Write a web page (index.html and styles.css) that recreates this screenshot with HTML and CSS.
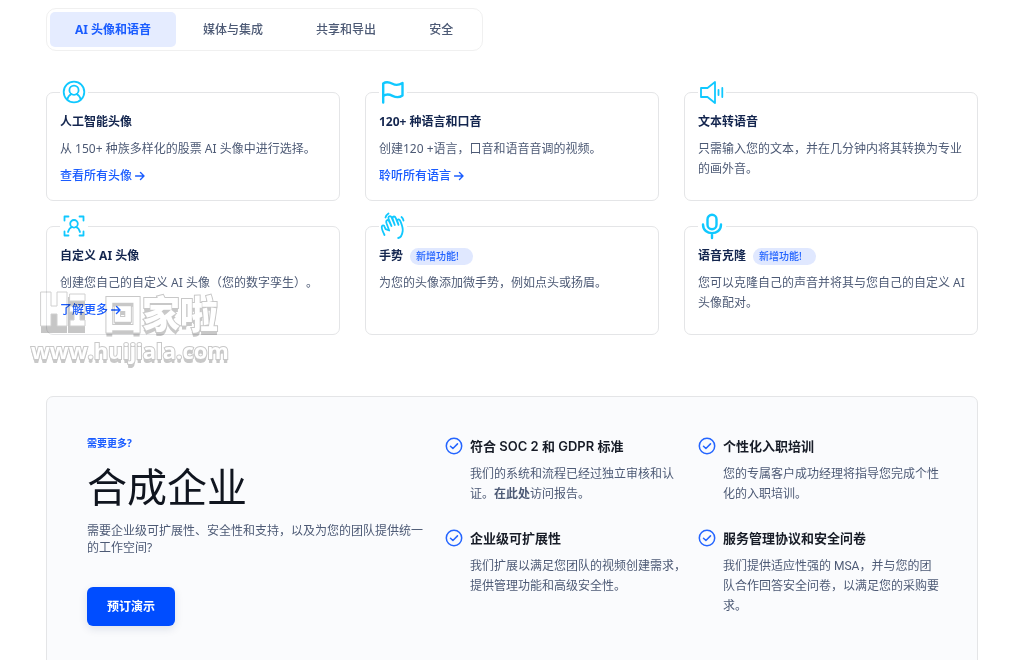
FILE: index.html
```html
<!DOCTYPE html>
<html lang="zh-CN">
<head>
<meta charset="utf-8">
<meta name="viewport" content="width=device-width, initial-scale=1">
<title>合成企业</title>
<link rel="stylesheet" href="styles.css">
</head>
<body>
<main class="page">
  <nav class="tabs">
    <button class="tab tab-active" type="button">AI 头像和语音</button>
    <button class="tab" type="button">媒体与集成</button>
    <button class="tab" type="button">共享和导出</button>
    <button class="tab" type="button">安全</button>
  </nav>

  <section class="cards">
    <article class="card">
      <span class="card-icon"><svg viewBox="0 0 24 24"><circle cx="12" cy="12" r="10.3"/><circle cx="12" cy="10.2" r="4.6"/><path d="M5.2 19.500c.8-3.400 2.500-4.600 4.300-5.500M18.800 19.500c-.8-3.400-2.500-4.600-4.300-5.500"/></svg></span>
      <h3>人工智能头像</h3>
      <p>从 150+ 种族多样化的股票 AI 头像中进行选择。</p>
      <a class="link" href="#">查看所有头像<svg viewBox="0 0 10 10"><path d="M.5 5h8.500M5.500 1.500 9 5 5.500 8.500"/></svg></a>
    </article>
    <article class="card">
      <span class="card-icon icon-bold"><svg viewBox="0 0 24 24"><path d="M2.200 22.500V3.500C5 1.500 8 2 11.500 3.800S18 5.200 21.500 3V15.500C18 18 15 17.500 11.500 15.800S5 14 2.200 16"/></svg></span>
      <h3>120+ 种语言和口音</h3>
      <p>创建120 +语言，口音和语音音调的视频。</p>
      <a class="link" href="#">聆听所有语言<svg viewBox="0 0 10 10"><path d="M.5 5h8.500M5.500 1.500 9 5 5.500 8.500"/></svg></a>
    </article>
    <article class="card">
      <span class="card-icon"><svg viewBox="0 0 24 24"><path d="M1 8h6.500l7.500-6v21l-7.500-6H1ZM18.500 10v5M22.300 8v9"/></svg></span>
      <h3>文本转语音</h3>
      <p>只需输入您的文本，并在几分钟内将其转换为专业的画外音。</p>
    </article>
    <article class="card">
      <span class="card-icon"><svg viewBox="0 0 24 24"><path d="M2.500 6.500V2.500H6.500M17.500 2.500h4V6.500M21.500 17.500v4H17.500M6.500 21.500H2.500V17.500"/><circle cx="12" cy="9.800" r="3.800"/><path d="M6 18c.8-3 2.200-4.300 4-5M18 18c-.8-3-2.200-4.300-4-5"/></svg></span>
      <h3>自定义 AI 头像</h3>
      <p class="untrimmed">创建您自己的自定义 AI 头像（您的数字孪生）。</p>
      <a class="link" href="#">了解更多<svg viewBox="0 0 10 10"><path d="M.5 5h8.500M5.500 1.500 9 5 5.500 8.500"/></svg></a>
    </article>
    <article class="card">
      <span class="card-icon"><svg viewBox="0 0 24 24"><path d="M3.500 21C2 18 .5 14 .8 12.500c.5-1.700 2.300-1.300 2.800.3l1 2.400 3.600 1.300L5.500 9.200C4.500 6 7 5 8.300 7.500l2.200 4.500L7.700 5C6.700 2 9.500 1 10.800 3.800l3 7.200-2-5.700c-1-3 1.800-3.800 3-1.200l2.700 6.700-1-3.200c-.7-2.500 1.800-3 2.700-.8 1.200 3 3 6.700 2.500 10.200-.4 3.200-1.200 6.500-4.500 7M4.500 3.500C5 1.500 6 .5 7.500-.5M20.500 3c1 .8 1.700 2 2 3.500"/></svg></span>
      <h3>手势 <span class="badge">新增功能!</span></h3>
      <p>为您的头像添加微手势，例如点头或扬眉。</p>
    </article>
    <article class="card">
      <span class="card-icon icon-bold"><svg viewBox="0 0 24 24"><rect x="7.500" y=".8" width="9" height="14.500" rx="4.500"/><path d="M3 10.500c0 11.500 18 11.500 18 0M12 19.500V24"/></svg></span>
      <h3>语音克隆 <span class="badge">新增功能!</span></h3>
      <p>您可以克隆自己的声音并将其与您自己的自定义 AI 头像配对。</p>
    </article>
  </section>

  <section class="enterprise">
    <div class="intro">
      <p class="eyebrow">需要更多?</p>
      <h2>合成企业</h2>
      <p class="lead">需要企业级可扩展性、安全性和支持，以及为您的团队提供统一的工作空间?</p>
      <button class="cta" type="button">预订演示</button>
    </div>
    <ul class="features">
      <li class="feature">
        <svg viewBox="0 0 18 18"><circle cx="9" cy="9" r="7.700"/><path d="m5.500 9.200 2.400 2.300 4.600-4.600"/></svg>
        <div><h4>符合 SOC 2 和 GDPR 标准</h4><p>我们的系统和流程已经过独立审核和认<br>证。<strong>在此处</strong>访问报告。</p></div>
      </li>
      <li class="feature">
        <svg viewBox="0 0 18 18"><circle cx="9" cy="9" r="7.700"/><path d="m5.500 9.200 2.400 2.300 4.600-4.600"/></svg>
        <div><h4>个性化入职培训</h4><p>您的专属客户成功经理将指导您完成个性化的入职培训。</p></div>
      </li>
      <li class="feature">
        <svg viewBox="0 0 18 18"><circle cx="9" cy="9" r="7.700"/><path d="m5.500 9.200 2.400 2.300 4.600-4.600"/></svg>
        <div><h4>企业级可扩展性</h4><p>我们扩展以满足您团队的视频创建需求，提供管理功能和高级安全性。</p></div>
      </li>
      <li class="feature">
        <svg viewBox="0 0 18 18"><circle cx="9" cy="9" r="7.700"/><path d="m5.500 9.200 2.400 2.300 4.600-4.600"/></svg>
        <div><h4>服务管理协议和安全问卷</h4><p>我们提供适应性强的 MSA，并与您的团队合作回答安全问卷，以满足您的采购要求。</p></div>
      </li>
    </ul>
  </section>
</main>

<div class="watermark">
  <div class="mark-row">
    <svg class="mark-logo" viewBox="0 0 46 42"><path class="mark-shade" d="M1 6h10v13h6V6h10v36H1ZM28 6h17v36H28Z"/><path class="mark-face" d="M1 1h10v14h6V1h10v34H17V23h-6v12H1ZM30 3h15v7H30ZM30 15h15v6H40v8h5v6H30v-6h4v-8h-4Z"/></svg>
    <span class="mark-name">回家啦</span>
  </div>
  <span class="mark-url">www.huijiala.com</span>
</div>
</body>
</html>
```

FILE: styles.css
```css
* { box-sizing: border-box; }

body {
  margin: 0;
  background: #fff;
  color: #4d5a75;
  font: 12px/20px "Noto Sans", "Noto Sans CJK SC", sans-serif;
}

h2, h3, h4, p, ul { margin: 0; padding: 0; }
button { font: inherit; border: 0; cursor: pointer; }
svg { fill: none; stroke: currentColor; stroke-linecap: round; stroke-linejoin: round; }

.page { padding: 8px 46px 0; }

.tabs {
  display: inline-flex;
  gap: 1px;
  padding: 3px;
  border: 1px solid #f0f0f0;
  border-radius: 10px;
  vertical-align: top;
}
.tab {
  height: 35px;
  padding: 0 26px;
  border-radius: 5px;
  background: none;
  color: #4d5a75;
  font-weight: 500;
}
.tab-active { padding: 0 25px; background: #e5ecff; color: #1a5cff; font-weight: 700; }

.cards {
  display: grid;
  grid-template-columns: repeat(3, 1fr);
  gap: 25px;
  margin-top: 41px;
}
.card {
  position: relative;
  min-height: 109px;
  padding: 19px 8px 14px 13px;
  border: 1px solid #e4e5e7;
  border-radius: 7px;
}
.card-icon {
  position: absolute;
  top: -13px;
  left: 13px;
  display: flex;
  padding: 0 2px;
  background: #fff;
  color: #10c8ff;
}
.card-icon svg { width: 24px; height: 24px; stroke-width: 1.8; overflow: visible; }
.card-icon.icon-bold svg { stroke-width: 2.4; }
.card h3 {
  display: flex;
  align-items: center;
  gap: 7px;
  height: 20px;
  margin-bottom: 7px;
  color: #14264f;
  font-size: 12px;
  font-weight: 700;
}
.badge {
  padding: 0 14px 0 6px;
  border-radius: 9px;
  background: #e0e8ff;
  color: #2162ff;
  font-size: 10px;
  line-height: 17px;
  font-weight: 500;
}
.untrimmed { text-spacing-trim: space-all; }
.link {
  display: flex;
  align-items: center;
  gap: 3px;
  margin-top: 7px;
  color: #1a5cff;
  text-decoration: none;
  font-weight: 500;
}
.link svg { width: 10px; height: 10px; stroke-width: 1.4; }

.enterprise {
  display: grid;
  grid-template-columns: 340px 1fr;
  gap: 18px;
  margin-top: 61px;
  padding: 36px 36px 60px 40px;
  border: 1px solid #e4e5e7;
  border-radius: 7px;
  background: #fafbfd;
}
.eyebrow { color: #1a5cff; font-size: 10px; font-weight: 700; }
.intro h2 {
  margin-top: 4px;
  color: #10151f;
  font-size: 40px;
  line-height: 60px;
  font-weight: 400;
}
.lead { margin-top: 5px; line-height: 17px; }
.cta {
  height: 39px;
  margin-top: 31px;
  padding: 0 20px;
  border-radius: 6px;
  background: #004dff;
  box-shadow: 0 3px 8px rgba(20, 40, 90, 0.12);
  color: #fff;
  font-weight: 700;
}
.features {
  display: grid;
  grid-template-columns: 1fr 1fr;
  gap: 24px 10px;
  align-content: start;
  padding-top: 3px;
  list-style: none;
}
.feature {
  display: grid;
  grid-template-columns: 18px 1fr;
  gap: 7px;
  font-family: Roboto, "Noto Sans CJK SC", sans-serif;
}
.feature svg { width: 18px; height: 18px; margin-top: 1px; color: #2465ff; stroke-width: 1.5; }
.feature h4 {
  margin-bottom: 8px;
  color: #171c27;
  font: 600 13px/20px Inter, "Noto Sans CJK SC", sans-serif;
}

.watermark {
  position: absolute;
  top: 288px;
  left: 31px;
  display: grid;
  color: #fff;
  mix-blend-mode: multiply;
  pointer-events: none;
}
.mark-row { display: flex; align-items: center; gap: 18px; height: 48px; padding-left: 9px; }
.mark-logo { width: 46px; height: 42px; }
.mark-shade { fill: #c6c6c6; stroke: none; }
.mark-face { fill: #fff; stroke: #d0d0d0; stroke-width: 1; }
.mark-name, .mark-url {
  -webkit-text-stroke: 2px #c8c8c8;
  paint-order: stroke fill;
  text-shadow: 0 2px #c8c8c8, 0 4px #c8c8c8;
}
.mark-name { font: 900 38px/42px "Noto Sans CJK SC", sans-serif; }
.mark-url { font: 700 22px/28px "Open Sans", sans-serif; }
```
